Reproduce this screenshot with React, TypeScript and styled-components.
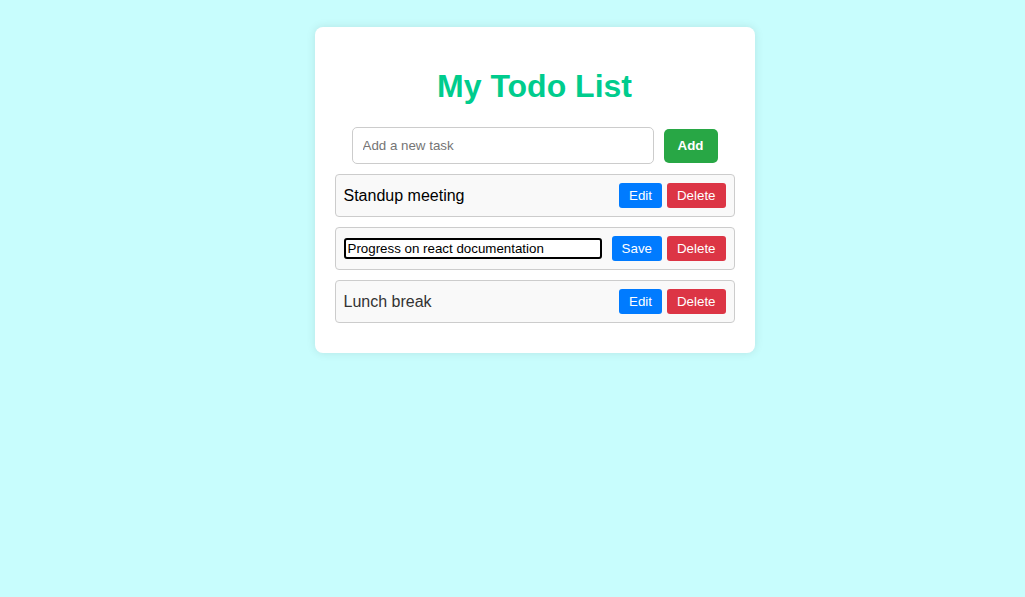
import React from "react";
import styled, { createGlobalStyle } from "styled-components";

const Global = createGlobalStyle`
  html, body { margin: 0; padding: 0; }
  body {
    background: #c8fdfd;
    font-family: "Liberation Sans", Arial, sans-serif;
    min-height: 597px;
  }
`;

const Page = styled.div`
  display: flex;
  justify-content: center;
  padding-top: 27px;
  padding-left: 44px;
`;

const Card = styled.div`
  width: 400px;
  padding: 20px;
  background: #ffffff;
  border-radius: 8px;
  box-shadow: 0 0 10px rgba(0, 0, 0, 0.1);
`;

const Title = styled.h1`
  margin: 21px 0 22px;
  text-align: center;
  font-size: 32px;
  line-height: 37px;
  font-weight: bold;
  color: #00cc8d;
`;

const AddRow = styled.div`
  display: flex;
  justify-content: center;
  align-items: center;
  gap: 10px;
  margin-bottom: 10px;
`;

const NewInput = styled.input`
  box-sizing: border-box;
  width: 302px;
  height: 37px;
  padding: 0 10px;
  border: 1px solid #ccc;
  border-radius: 5px;
  font-family: "Liberation Sans", Arial, sans-serif;
  font-size: 13.33px;
  outline: none;
  &::placeholder { color: #757575; }
`;

const AddButton = styled.button`
  box-sizing: border-box;
  width: 54px;
  height: 34px;
  border: none;
  border-radius: 5px;
  background: #28a745;
  color: #fff;
  font-family: "Liberation Sans", Arial, sans-serif;
  font-size: 13.33px;
  font-weight: bold;
  cursor: pointer;
`;

const List = styled.ul`
  list-style: none;
  margin: 0;
  padding: 0;
  display: flex;
  flex-direction: column;
  gap: 10px;
  margin-bottom: 10px;
`;

const Item = styled.li`
  display: flex;
  align-items: center;
  justify-content: space-between;
  padding: 8px;
  background: #f9f9f9;
  border: 1px solid #ccc;
  border-radius: 4px;
`;

const ItemText = styled.span<{ $tone: string }>`
  font-size: 16px;
  color: ${(p) => p.$tone};
`;

const EditInput = styled.input`
  flex: 1;
  box-sizing: border-box;
  height: 21px;
  margin: 0 10px 0 0;
  padding: 0 2px;
  border: 2px solid #000;
  border-radius: 3px;
  font-family: "Liberation Sans", Arial, sans-serif;
  font-size: 13.33px;
  color: #000;
  outline: none;
  caret-color: #000;
`;

const Actions = styled.div`
  display: flex;
  gap: 5px;
`;

const SmallButton = styled.button<{ $bg: string }>`
  height: 25px;
  padding: 0 10px;
  border: none;
  border-radius: 3px;
  background: ${(p) => p.$bg};
  color: #fff;
  font-family: "Liberation Sans", Arial, sans-serif;
  font-size: 13.33px;
  cursor: pointer;
`;

const todos = [
  { text: "Standup meeting", editing: false, tone: "#000" },
  { text: "Progress on react documentation", editing: true, tone: "#000" },
  { text: "Lunch break", editing: false, tone: "#333" },
];

export default function App() {
  const editRef = React.useRef<HTMLInputElement>(null);
  React.useEffect(() => {
    const el = editRef.current;
    if (el) {
      el.focus();
      const n = el.value.length;
      el.setSelectionRange(n, n);
    }
  }, []);
  return (
    <>
      <Global />
      <Page>
        <Card>
          <Title>My Todo List</Title>
          <AddRow>
            <NewInput placeholder="Add a new task" />
            <AddButton>Add</AddButton>
          </AddRow>
          <List>
            {todos.map((t) => (
              <Item key={t.text}>
                {t.editing ? (
                  <EditInput ref={editRef} defaultValue={t.text} />
                ) : (
                  <ItemText $tone={t.tone}>{t.text}</ItemText>
                )}
                <Actions>
                  <SmallButton $bg="#007bff">{t.editing ? "Save" : "Edit"}</SmallButton>
                  <SmallButton $bg="#dc3545">Delete</SmallButton>
                </Actions>
              </Item>
            ))}
          </List>
        </Card>
      </Page>
    </>
  );
}
